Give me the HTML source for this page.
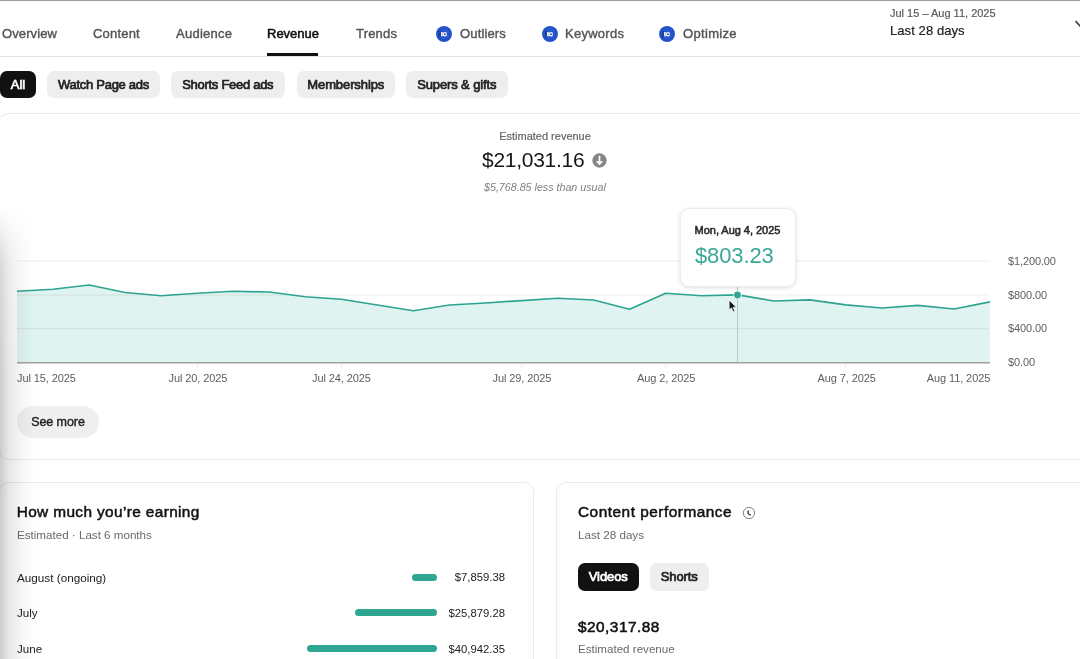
<!DOCTYPE html>
<html><head><meta charset="utf-8">
<style>
*{box-sizing:border-box;margin:0;padding:0}
html,body{width:1080px;height:659px;overflow:hidden;background:#fff}
body{font-family:"Liberation Sans",sans-serif;position:relative;color:#111;filter:blur(.45px)}
.abs{position:absolute;white-space:nowrap}
.md{-webkit-text-stroke:.35px currentColor}
.topline{left:0;top:0;width:1080px;height:2px;background:linear-gradient(#a0a0a0,#a0a0a0 50%,#f0f0f0 50%,#fff)}
.tab{top:26px;font-size:13px;color:#555;line-height:16px;-webkit-text-stroke:.4px currentColor}
.tab.on{color:#0c0c0c;-webkit-text-stroke:.5px currentColor}
.uline{left:267px;top:53px;width:51px;height:3px;background:#111}
.navb{left:0;top:56px;width:1080px;height:1px;background:#e2e2e2}
.chip{top:71px;height:27px;border-radius:7px;background:#eeeeee;font-size:13px;color:#222;line-height:28px;text-align:center;-webkit-text-stroke:.7px currentColor}
.chip.dark{background:#111;color:#fff}
.card{border:1px solid #ebebeb;border-radius:9px;background:#fff}
.small{font-size:11px;color:#666}
.shade{left:0;top:205px;width:36px;height:454px;background:linear-gradient(90deg,rgba(0,0,0,.2),rgba(0,0,0,.095) 26%,rgba(0,0,0,.045) 55%,rgba(0,0,0,.015) 80%,rgba(0,0,0,0));-webkit-mask-image:linear-gradient(180deg,transparent,rgba(0,0,0,.75) 60px,#000 180px)}
</style></head><body>
<div class="abs topline"></div>

<div class="abs tab" style="left:2px;letter-spacing:.1px">Overview</div>
<div class="abs tab" style="left:93px;letter-spacing:.2px">Content</div>
<div class="abs tab" style="left:176px;letter-spacing:.25px">Audience</div>
<div class="abs tab on" style="left:267px">Revenue</div>
<div class="abs tab" style="left:356px;letter-spacing:.18px">Trends</div>
<div class="abs tab" style="left:460px;letter-spacing:.15px">Outliers</div>
<div class="abs tab" style="left:565px;letter-spacing:.27px">Keywords</div>
<div class="abs tab" style="left:683px;letter-spacing:.33px">Optimize</div>
<svg class="abs" style="left:436px;top:25.800px" width="16" height="16" viewBox="0 0 16 16"><circle cx="8" cy="8" r="8" fill="#2758cf"/><circle cx="8" cy="8" r="6.300" fill="none" stroke="#2250c0" stroke-width="1.400"/><path d="M3.300 4.400L5.400 6V10.600L3.500 11.800Z" fill="#12307e"/><rect x="4.900" y="6" width="1.800" height="4.400" fill="#e6ecfa"/><circle cx="8.950" cy="8.200" r="1.600" fill="#1d3f99" stroke="#eef2fc" stroke-width="1.450"/><path d="M11.200 7.300v2" stroke="#1a3a94" stroke-width=".9" stroke-opacity=".7"/></svg>
<svg class="abs" style="left:541.800px;top:25.800px" width="16" height="16" viewBox="0 0 16 16"><circle cx="8" cy="8" r="8" fill="#2758cf"/><circle cx="8" cy="8" r="6.300" fill="none" stroke="#2250c0" stroke-width="1.400"/><path d="M3.300 4.400L5.400 6V10.600L3.500 11.800Z" fill="#12307e"/><rect x="4.900" y="6" width="1.800" height="4.400" fill="#e6ecfa"/><circle cx="8.950" cy="8.200" r="1.600" fill="#1d3f99" stroke="#eef2fc" stroke-width="1.450"/><path d="M11.200 7.300v2" stroke="#1a3a94" stroke-width=".9" stroke-opacity=".7"/></svg>
<svg class="abs" style="left:659px;top:25.800px" width="16" height="16" viewBox="0 0 16 16"><circle cx="8" cy="8" r="8" fill="#2758cf"/><circle cx="8" cy="8" r="6.300" fill="none" stroke="#2250c0" stroke-width="1.400"/><path d="M3.300 4.400L5.400 6V10.600L3.500 11.800Z" fill="#12307e"/><rect x="4.900" y="6" width="1.800" height="4.400" fill="#e6ecfa"/><circle cx="8.950" cy="8.200" r="1.600" fill="#1d3f99" stroke="#eef2fc" stroke-width="1.450"/><path d="M11.200 7.300v2" stroke="#1a3a94" stroke-width=".9" stroke-opacity=".7"/></svg>
<div class="abs uline"></div>
<div class="abs navb"></div>

<div class="abs" style="left:890px;top:7.100px;font-size:11px;color:#5a5a5a;-webkit-text-stroke:.2px currentColor">Jul 15 – Aug 11, 2025</div>
<div class="abs" style="left:890px;top:23px;font-size:13px;color:#222;letter-spacing:.08px;-webkit-text-stroke:.2px currentColor">Last 28 days</div>
<svg class="abs" style="left:1070px;top:16px" width="10" height="14" viewBox="0 0 10 14"><path d="M5.500 5l5 5.500" stroke="#333" stroke-width="1.600" fill="none"/></svg>

<div class="abs chip dark" style="left:0;width:36px">All</div>
<div class="abs chip" style="left:47px;width:113px;letter-spacing:-.28px">Watch Page ads</div>
<div class="abs chip" style="left:171px;width:113.500px;letter-spacing:-.28px">Shorts Feed ads</div>
<div class="abs chip" style="left:296.500px;width:98.500px;letter-spacing:-.1px">Memberships</div>
<div class="abs chip" style="left:405.500px;width:102.500px;letter-spacing:-.12px">Supers &amp; gifts</div>

<div class="abs card" style="left:-1px;top:113px;width:1100px;height:347px"></div>

<div class="abs" style="left:445px;width:200px;text-align:center;top:129.600px;font-size:11px;color:#666;-webkit-text-stroke:.2px currentColor">Estimated revenue</div>
<div class="abs" style="left:482px;top:148.400px;font-size:21px;color:#161616;letter-spacing:-.27px">$21,031.16</div>
<svg class="abs" style="left:591.700px;top:153.100px" width="15" height="15" viewBox="0 0 15 15"><circle cx="7.500" cy="7.500" r="7.150" fill="#858585"/><path d="M7.500 2.800v6" stroke="#fff" stroke-width="1.700" fill="none"/><path d="M3.700 8.200h7.600L7.500 12.300z" fill="#fff"/></svg>
<div class="abs" style="left:484px;top:180.500px;font-size:10.700px;color:#808080;font-style:italic">$5,768.85 less than usual</div>

<svg class="abs" style="left:0;top:200px" width="1080" height="200" viewBox="0 200 1080 200">
<path d="M17.0 291.250L53.0 289.250L89.100 285L125.100 292.500L161.100 295.750L197.200 293.250L233.200 291.250L269.300 292L305.300 296.750L341.300 299.250L377.400 305L413.400 310.750L449.400 305L485.500 303L521.500 300.600L557.600 298.250L593.600 300L629.600 309.250L665.700 293.250L701.700 295.750L737.700 294.900L773.800 301L809.800 299.800L845.900 304.800L881.900 308L917.900 305.400L954.0 309L990.0 301.900V362H17Z" fill="#dff3f1"/>
<g stroke="#000" stroke-opacity=".07" stroke-width="1"><path d="M17 261H990M17 295H990M17 328.700H990"/></g>
<path d="M17.0 291.250L53.0 289.250L89.100 285L125.100 292.500L161.100 295.750L197.200 293.250L233.200 291.250L269.300 292L305.300 296.750L341.300 299.250L377.400 305L413.400 310.750L449.400 305L485.500 303L521.500 300.600L557.600 298.250L593.600 300L629.600 309.250L665.700 293.250L701.700 295.750L737.700 294.900L773.800 301L809.800 299.800L845.900 304.800L881.900 308L917.900 305.400L954.0 309L990.0 301.900" fill="none" stroke="#2ea490" stroke-width="1.750" stroke-linejoin="round"/>
<path d="M197.500 363v5M341.500 363v5M521.500 363v5M665.500 363v5M845.500 363v5" stroke="#f0f0f0" stroke-width="1"/>
<path d="M17 362.800H990" stroke="#a2a2a2" stroke-width="1.600"/>
<path d="M737.500 286V362" stroke="#b4cbc8" stroke-width="1"/>
<circle cx="737.500" cy="295" r="4.300" fill="#fff" fill-opacity=".8"/>
<circle cx="737.500" cy="295" r="3.400" fill="#2ea691"/>
<g font-family="Liberation Sans, sans-serif" font-size="11" fill="#5e5e5e" letter-spacing="-.12">
<text x="1008" y="265.200">$1,200.00</text><text x="1008" y="299">$800.00</text><text x="1008" y="332.100">$400.00</text><text x="1008" y="366.200">$0.00</text></g>
<g font-family="Liberation Sans, sans-serif" font-size="11" fill="#5e5e5e" letter-spacing="-.1">
<text x="17" y="382">Jul 15, 2025</text><text x="168.500" y="382">Jul 20, 2025</text><text x="312" y="382">Jul 24, 2025</text><text x="492.500" y="382">Jul 29, 2025</text><text x="637" y="382">Aug 2, 2025</text><text x="817.500" y="382">Aug 7, 2025</text><text x="990.200" y="382" text-anchor="end">Aug 11, 2025</text>
</g>
</svg>

<div class="abs" style="left:680px;top:207.500px;width:116px;height:79px;border-radius:9px;background:#fff;border:1px solid #ececec;box-shadow:0 1px 4px rgba(0,0,0,.13)"></div>
<div class="abs" style="left:694.600px;top:224.400px;font-size:11px;color:#2a2a2a;letter-spacing:-.03px;-webkit-text-stroke:.55px currentColor">Mon, Aug 4, 2025</div>
<div class="abs" style="left:695px;top:243.300px;font-size:22px;letter-spacing:-.12px;color:#38a795">$803.23</div>
<svg class="abs" style="left:727.500px;top:299px" width="9" height="14" viewBox="0 0 9 14"><path d="M1.200 1.200v9.800l2.300-2.200 1.700 3.900 1.500-.7-1.700-3.700h3.100z" fill="#111" stroke="#fff" stroke-width=".6"/></svg>

<div class="abs" style="left:17px;top:406px;width:82px;height:31.500px;border-radius:16px;background:#efefef;font-size:12.500px;color:#222;line-height:32.200px;text-align:center;letter-spacing:-.06px;-webkit-text-stroke:.4px currentColor">See more</div>

<div class="abs card" style="left:-1px;top:481.500px;width:535px;height:200px;border-radius:10px"></div>
<div class="abs card" style="left:555.500px;top:481.500px;width:560px;height:200px;border-radius:10px"></div>

<div class="abs" style="left:16.700px;top:503.200px;font-size:15.400px;color:#111;letter-spacing:.37px;-webkit-text-stroke:.5px currentColor">How much you’re earning</div>
<div class="abs" style="left:17px;top:528.400px;font-size:11.620px;color:#6a6a6a">Estimated · Last 6 months</div>
<div class="abs" style="left:17px;top:571px;font-size:11.720px;color:#222">August (ongoing)</div>
<div class="abs" style="left:17px;top:606px;font-size:11.600px;color:#222">July</div>
<div class="abs" style="left:17px;top:641.700px;font-size:11.600px;color:#222">June</div>
<div class="abs" style="left:411.500px;top:573.500px;width:25px;height:7px;border-radius:3.500px;background:#2ea691"></div>
<div class="abs" style="left:354.500px;top:609.300px;width:82px;height:7px;border-radius:3.500px;background:#2ea691"></div>
<div class="abs" style="left:306.500px;top:644.800px;width:130px;height:7px;border-radius:3.500px;background:#2ea691"></div>
<div class="abs" style="left:405px;width:100px;text-align:right;top:571px;font-size:11.300px;color:#222">$7,859.38</div>
<div class="abs" style="left:405px;width:100px;text-align:right;top:606.500px;font-size:11.300px;color:#222">$25,879.28</div>
<div class="abs" style="left:405px;width:100px;text-align:right;top:642.500px;font-size:11.300px;color:#222">$40,942.35</div>

<div class="abs" style="left:578px;top:503.200px;font-size:15.400px;color:#111;letter-spacing:.5px;-webkit-text-stroke:.5px currentColor">Content performance</div>
<svg class="abs" style="left:742.100px;top:505.900px" width="14" height="14" viewBox="0 0 14 14"><circle cx="7" cy="7" r="5.650" fill="none" stroke="#7d7d7d" stroke-width=".95"/><path d="M6.200 4.400V7.700L8.700 9.300" stroke="#333" stroke-width="1.350" fill="none"/></svg>
<div class="abs" style="left:578px;top:528px;font-size:11.650px;color:#6a6a6a">Last 28 days</div>
<div class="abs chip dark" style="left:578px;top:563.300px;width:60.500px;height:27.500px;line-height:27.500px;letter-spacing:-.1px">Videos</div>
<div class="abs chip" style="left:649.700px;top:563.300px;width:59px;height:27.500px;line-height:27.500px;letter-spacing:-.15px">Shorts</div>
<div class="abs" style="left:578px;top:618.300px;font-size:15.400px;color:#111;letter-spacing:.48px;-webkit-text-stroke:.55px currentColor">$20,317.88</div>
<div class="abs" style="left:578px;top:641.800px;font-size:11.600px;color:#6a6a6a">Estimated revenue</div>

<div class="abs shade"></div>
</body></html>
